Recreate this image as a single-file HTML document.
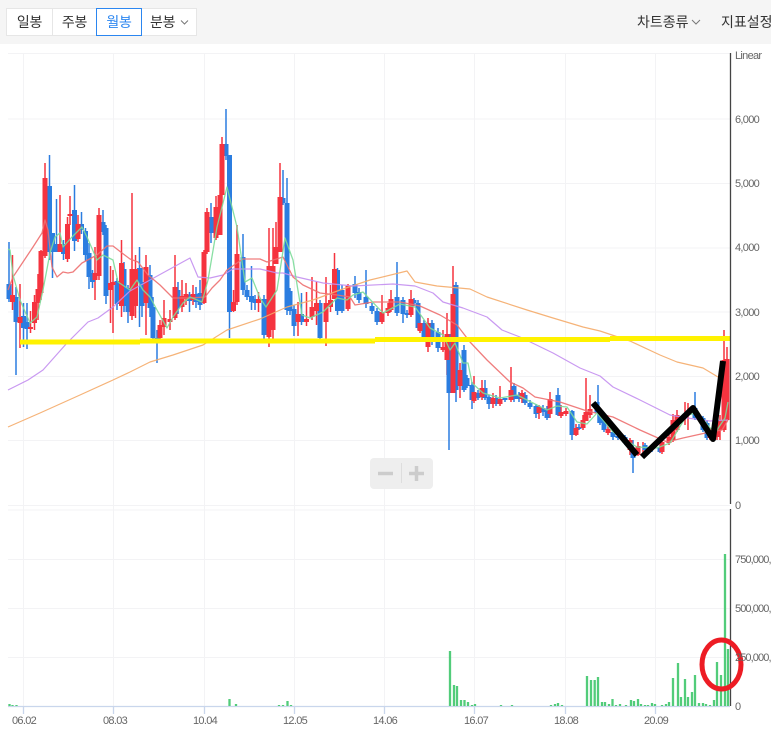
<!DOCTYPE html>
<html lang="ko"><head><meta charset="utf-8"><title>차트</title>
<style>
html,body{margin:0;padding:0;width:771px;height:733px;overflow:hidden;background:#fff}
body{position:relative;font-family:"Liberation Sans","Noto Sans CJK KR",sans-serif}
.bar{position:absolute;left:0;top:0;width:771px;height:44px;background:#f5f5f5}
.b{position:absolute;top:8px;height:28px;line-height:26px;box-sizing:border-box;border:1px solid #e6e6e6;background:#fff;font-size:14px;letter-spacing:-.2px;color:#333;text-align:center}
.r{position:absolute;top:12px;font-size:14px;line-height:20px;color:#333;white-space:nowrap}
svg{position:absolute;left:0;top:0}
svg text{font-family:"Liberation Sans",sans-serif;font-size:11px;fill:#666;letter-spacing:-.7px}
svg text.v{letter-spacing:-.9px}
</style></head><body>
<svg width="771" height="733" viewBox="0 0 771 733" fill="none">
<path d="M8 53.5H730M8 119H730M8 183.500H730M8 248H730M8 312H730M8 376.500H730M8 440.500H730M8 505.500H730M8 559.500H730M8 608.500H730M8 657.500H730M8 510H730" stroke="#f3f3f5" stroke-width="1"/>
<path d="M23.500 53V706M113.500 53V706M204.500 53V706M294.500 53V706M384.500 53V706M474.500 53V706M565.500 53V706M655.500 53V706" stroke="#f3f3f5" stroke-width="1"/>
<path d="M8 706.500H730M23.500 706V714M113.500 706V714M204.500 706V714M294.500 706V714M384.500 706V714M474.500 706V714M565.500 706V714M655.500 706V714" stroke="#c9d6ec" stroke-width="1.300"/>
<path stroke="#2b7de0" stroke-width="1.500" d="M9 242V302M16 287V375M23.500 303V347M27 303V349M49.500 155V260M52.500 233V278M56.500 199V250M63.500 240V260M74.500 185V251M81.500 212V234M85.500 228V261M89 243V289M92.500 270V288M103 210V235M106 225V304M117 278V310M124 262V312M128 285V323M139.500 247V327M142 268V317M150 265V317M153 297V340M157 330V363M178 282V314M189.500 292V312M196 287V308M200 280V310M211 203V243M226 109V160M229.500 155V338M243 234V295M247 285V300M251.500 266V310M255 295V310M264 295V340M283 170V205M287 178V315M290 288V315M294 305V336M301.500 293V325M320 300V340M337.500 268V315M342 285V313M355 276V298M359 288V303M366 270V308M372 303V314M377 308V325M397 262V316M403 297V323M407 310V318M414 298V306M418 300V330M424 320V340M432 320V345M438 328V352M449 334V450M456 282V402M464 345V392M467 375V388M472 382V409M478 390V400M485 380V400M489 395V409M496 395V406M505 398V402M514 383V402M519 392V402M525 392V405M530 400V409M536 404V418M543 405V416M547 406V420M558 388V416M572 410V440M579 424V430M598 385V423M600 408V425M604 415V432M613 430V440M618 432V440M625 435V445M633 440V473M645 443V452M652 444V452M660 445V453M695 392V420M703 416V432M707 420V440"/>
<path stroke="#f5333f" stroke-width="1.500" d="M12.500 255V310M20 284V348M30.500 311V333M34.500 295V330M38 274V320M41 250V300M45 163V258M60 195V252M67.500 217V262M70 196V225M78 215V242M95 247V300M99 208V280M110.500 266V323M113 270V333M121.500 240V317M132 193V320M135.500 255V318M146 255V335M160 320V340M164 300V335M170 310V330M175 255V320M182 280V312M186 283V305M193 285V305M204 250V304M207 208V254M216 196V240M220 180V235M222 137V205M233.500 290V312M237 225V305M258.500 292V312M269 228V347M273 228V340M276 222V264M280 163V252M298 302V336M306.500 292V326M312 277V320M316.500 282V325M326 277V346M330.500 285V312M334.500 253V299M348 284V311M382 295V324M388 303V316M391 290V312M411 290V317M420 315V333M428 318V352M443 330V352M447 313V375M453 266V393M460 363V398M474 376V403M482 380V400M493 393V408M500 386V406M511 367V402M522 390V403M539 405V419M550 392V418M561 405V418M566 408V416M576 424V436M583 415V430M586 378V421M590 395V418M608 425V435M630 438V455M638 442V456M643 442V456M662 438V454M669 432V445M673 414V442M677 410V432M685 402V425M688 403V430M710 428V440M717 425V440M720 415V440M724 330V432M727 347V420"/>
<path stroke="#2b7de0" stroke-width="5" d="M9 284V299M16 297V322M23.500 316V328M27 322V329M49.500 186V252M52.500 233V252M56.500 244V252M63.500 244V254M74.500 210V241M81.500 224V230M85.500 231V255M89 253V277M92.500 273V282M103 222V232M106 228V296M117 281V304M124 269V306M128 288V312M139.500 268V282M142 282V306M150 275V308M153 307V338M157 338V342M178 290V308M189.500 295V301M196 294V302M200 293V305M211 217V233M226 144V156M229.500 155V312M243 257V290M247 290V297M251.500 296V302M255 299V303M264 299V335M283 198V203M287 203V310M290 291V311M294 309V326M301.500 314V322M320 303V338M337.500 270V311M342 290V311M355 284V293M359 292V300M366 297V304M372 306V311M377 311V322M397 297V313M403 300V314M407 313V315M414 300V303M418 303V328M424 323V337M432 323V337M438 332V348M449 334V393M456 285V390M464 350V390M467 378V386M472 385V400M478 393V398M485 388V398M489 397V404M496 398V404M505 398V400M514 386V399M519 395V399M525 395V403M530 403V407M536 406V414M543 408V412M547 409V418M558 395V415M572 411V435M579 427V429M597 402V413M600 412V423M604 417V430M613 432V437M618 436V438M625 437V443M633 452V458M645 445V450M652 447V449M660 447V452M695 408V418M703 418V430M707 423V438"/>
<path stroke="#f5333f" stroke-width="5" d="M12.500 295V302M20 317V323M30.500 327V329M34.500 302V323M38 289V303M41 251V293M45 178V256M60 244V252M67.500 224V259M70 214V216M78 224V239M95 273V280M99 215V276M110.500 283V290M113 282V285M121.500 263V306M132 269V316M135.500 269V306M146 267V303M160 325V338M164 318V327M170 319V322M175 287V318M182 296V307M186 294V299M193 294V300M204 252V303M207 212V252M216 207V238M220 195V235M222 144V195M233.500 302V311M237 254V302M258.500 299V303M269 266V337M273 266V330M276 247V264M280 197V252M298 314V322M306.500 319V322M312 307V317M316.500 303V311M326 303V322M330.500 300V307M334.500 269V299M348 286V309M382 312V322M388 308V313M391 299V310M411 299V315M420 323V331M428 323V347M443 347V350M447 334V360M453 294V393M460 370V386M474 392V401M482 388V397M493 398V404M500 399V404M511 390V400M522 393V399M539 407V413M550 399V414M561 412V416M566 411V414M576 428V435M583 420V428M586 412V421M590 409V415M608 429V433M630 440V450M638 446V455M662 442V452M669 437V443M673 420V440M677 415V430M710 433V438M717 430V437M720 420V430M724 360V430M727 359V420"/>
<g stroke-width="1.200" stroke-linejoin="round" opacity=".9">
<path stroke="#f5ab6a" d="M8 427L40 413L80 395L113 380L130 372L150 362L173 355L203 345L227 330L260 319L287 307L313 300L340 290L370 280L407 271L415 282L437 286L470 289L487 297L527 310L553 318L583 327L600 331L630 341L660 355L677 362L703 368L718 377"/>
<path stroke="#c48ff0" d="M8 390L28 380L43 370L67 343L88 322L98 318L113 307L130 291L190 258L198 277L210 278L223 275L233 269L260 269L277 273L283 273L297 277L323 283L353 286L393 284L415 286L433 293L443 302L463 308L487 317L502 330L520 337L553 353L580 368L600 376L613 387L640 400L670 415L687 418L710 421L728 420"/>
<path stroke="#ee7070" stroke-width="1.300" d="M8 290L13 277L23 262L33 247L42 233L45 220L48 230L52 267L57 277L63 272L68 273L73 272L82 263L97 255L107 246L113 246L122 253L130 259L138 262L148 275L160 285L173 298L190 298L205 297L212 288L220 280L227 270L237 263L243 259L260 259L267 262L283 257L293 277L303 285L320 293L337 295L350 297L355 305L373 302L400 302L420 306L440 315L457 325L470 342L487 360L510 382L523 388L535 397L560 402L587 411L613 417L640 430L667 442L683 438L710 432L722 430L728 420"/>
<path stroke="#7ddc9a" stroke-width="1.300" d="M8 249L10 250L13 275L20 300L30 323L37 317L43 290L50 253L55 237L60 233L63 247L72 237L82 227L87 237L97 260L103 255L113 260L118 282L130 290L137 280L143 290L150 297L157 310L167 328L173 317L183 303L190 297L202 302L208 280L217 227L227 187L237 227L245 282L252 278L260 298L266 307L277 290L285 238L293 260L302 315L310 318L323 312L337 298L347 300L353 295L363 292L383 313L400 304L415 307L430 328L443 335L450 350L455 343L463 363L468 363L472 383L483 393L500 398L517 395L533 403L547 410L557 406L567 407L577 422L587 424L597 413L613 432L637 447L657 448L670 443L687 415L698 413L710 428L717 430L725 418L728 402"/>
</g>
<path stroke="#fff200" stroke-width="5" d="M20 342H140M140 341H375M375 339.500H610M610 338.500H731"/>
<path stroke="#52cc7a" stroke-width="2.300" d="M9.500 704V706M12.500 705V706M16.500 705V706M229.500 699V706M236 704V706M279 705V706M283 705V706M287.500 701V706M291 705V706M450 651V706M454 685V706M457 686V706M461 700V706M464.500 700V706M468 702V706M472 705V706M475 704V706M501 705V706M512 705V706M551 705V706M555 704V706M558 703V706M562 705V706M587 676V706M591 680V706M594.700 680V706M598 677V706M602 702V706M605 702V706M609 704V706M612.500 699V706M616 705V706M620 704V706M626 705V706M631 700V706M634 701V706M638 699V706M641 704V706M645 705V706M648 705V706M652 703V706M655 704V706M662 705V706M666 704V706M669 702V706M673 678V706M678 663V706M681 697V706M685 679V706M688 697V706M692 692V706M695 675V706M699 703V706M703 703V706M706 704V706M710 705V706M714 700V706M717 662V706M721 675V706M725 554V706M728 649V706"/>
<path stroke="#444" stroke-width="1.300" d="M730.500 53V504M730.500 509V706"/>
<path stroke="#000" stroke-width="6" stroke-linejoin="round" d="M593 403L637 455M642 457L693 408L713 439L723 361"/>
<ellipse cx="721.500" cy="664.500" rx="19.500" ry="24.500" stroke="#ed1c24" stroke-width="5"/>
<text x="735" y="59">Linear</text>
<text x="735" y="123">6,000</text><text x="735" y="187">5,000</text><text x="735" y="251">4,000</text><text x="735" y="316">3,000</text><text x="735" y="380">2,000</text><text x="735" y="444">1,000</text><text x="735" y="509">0</text>
<text class="v" x="735" y="563">750,000,000</text><text class="v" x="735" y="612">500,000,000</text><text class="v" x="735" y="661">250,000,000</text><text x="735" y="710">0</text>
<text x="12" y="724">06.02</text><text x="103" y="724">08.03</text><text x="193" y="724">10.04</text><text x="283" y="724">12.05</text><text x="373" y="724">14.06</text><text x="464" y="724">16.07</text><text x="554" y="724">18.08</text><text x="644" y="724">20.09</text>
<rect x="370" y="458" width="63" height="31" rx="4" fill="#eee"/>
<path stroke="#ccc" stroke-width="3.500" d="M378 473.500H393M416.500 466V481M409 473.500H424"/>
<path stroke="#ddd" stroke-width="1" d="M401.500 463V483"/>
</svg>
<div class="bar"></div>
<div class="b" style="left:6px;width:47px">일봉</div>
<div class="b" style="left:52px;width:45px">주봉</div>
<div class="b" style="left:141px;width:56px;text-align:left;padding-left:8px">분봉</div>
<div class="b" style="left:96px;width:46px;border-color:#2b86f0;color:#2b86f0">월봉</div>
<svg width="771" height="44" viewBox="0 0 771 44" fill="none"><path d="M181 20.500L184.500 24L188 20.500M692 20L696 24L700 20" stroke="#777" stroke-width="1"/></svg>
<div class="r" style="left:637px">차트종류</div>
<div class="r" style="left:721px">지표설정</div>
</body></html>
